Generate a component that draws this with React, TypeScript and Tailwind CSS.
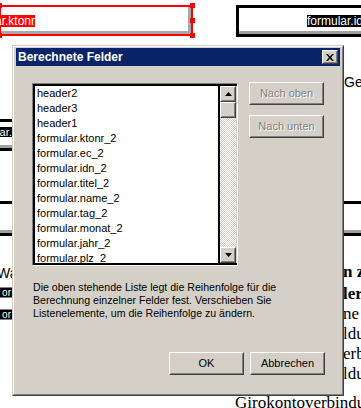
import React from "react";

const items = [
  "header2",
  "header3",
  "header1",
  "formular.ktonr_2",
  "formular.ec_2",
  "formular.idn_2",
  "formular.titel_2",
  "formular.name_2",
  "formular.tag_2",
  "formular.monat_2",
  "formular.jahr_2",
  "formular.plz_2",
];

// classic raised 3D edge (win2000 look)
function Raised({ className = "", children }: { className?: string; children?: React.ReactNode }) {
  return (
    <div className={`border border-white border-r-[#404040] border-b-[#404040] ${className}`}>
      <div className="flex h-full w-full items-center justify-center border border-[#d4d0c8] border-r-[#808080] border-b-[#808080] bg-[#d4d0c8]">
        {children}
      </div>
    </div>
  );
}

function Arrow({ down }: { down?: boolean }) {
  return (
    <svg width="7" height="4" viewBox="0 0 7 4">
      <path d={down ? "M0 0h7L3.5 4z" : "M0 4h7L3.5 0z"} fill="#000" />
    </svg>
  );
}

function PushButton({ label, disabled }: { label: string; disabled?: boolean }) {
  return (
    <Raised className="h-[23px] w-[75px]">
      <span
        className={`text-[11px] ${disabled ? "text-[#808080] [text-shadow:1px_1px_0_#fff]" : "text-black"}`}
      >
        {label}
      </span>
    </Raised>
  );
}

function Field({ className }: { className: string }) {
  return (
    <div className={`absolute border-[3px] border-black ${className}`}>
      <div className="h-full w-full border-b-[3px] border-[#a0a0a0] bg-white" />
    </div>
  );
}

export default function App() {
  return (
    <div className="relative h-[408px] w-[361px] overflow-hidden bg-white font-['Liberation_Sans',Arial,sans-serif]">
      {/* form designer canvas behind the dialog */}
      <div className="absolute left-[-1px] top-[5px] h-[31px] w-[194px] border-2 border-[#ff0000]">
        <div className="h-full w-full border-r-[3px] border-b-[3px] border-[#a8a8a8] bg-white" />
      </div>
      <div className="absolute left-[-3px] top-[3px] h-[5px] w-[5px] bg-[#ff0000]" />
      <div className="absolute left-[-3px] top-[33px] h-[5px] w-[5px] bg-[#ff0000]" />
      <div className="absolute left-[190px] top-[3px] h-[5px] w-[5px] bg-[#ff0000]" />
      <div className="absolute left-[190px] top-[18px] h-[5px] w-[5px] bg-[#ff0000]" />
      <div className="absolute left-[190px] top-[33px] h-[5px] w-[5px] bg-[#ff0000]" />
      <div className="absolute left-0 top-[15px] flex w-[35px] justify-end overflow-hidden">
        <span className="whitespace-nowrap bg-[#ff0000] text-[12px] leading-[12px] text-white">formular.ktonr</span>
      </div>

      <Field className="left-[236px] top-[5px] h-[32px] w-[140px]" />
      <span className="absolute left-[307px] top-[15px] whitespace-nowrap bg-black text-[12px] leading-[12px] text-white">
        formular.idn_2
      </span>

      <span className="absolute left-[344px] top-[72px] text-[14px] text-black">Ge</span>

      <Field className="left-[-100px] top-[119px] h-[32px] w-[250px]" />
      <div className="absolute left-0 top-[127px] flex w-[40px] justify-start overflow-hidden">
        <span className="ml-[-31px] whitespace-nowrap bg-black text-[11px] leading-[10px] text-white">formular.name</span>
      </div>

      <Field className="left-[-10px] top-[201px] h-[35px] w-[400px]" />

      <span className="absolute left-[-3px] top-[263px] text-[14px] text-black">Wa</span>
      <div className="absolute left-[-2px] top-[287px] flex w-[15px] justify-end border border-[#808080] bg-black pr-[1px]">
        <span className="text-[10px] leading-[9px] text-white">or</span>
      </div>
      <div className="absolute left-[-2px] top-[309px] flex w-[15px] justify-end border border-[#808080] bg-black pr-[1px]">
        <span className="text-[10px] leading-[9px] text-white">or</span>
      </div>

      <div className="absolute left-[343px] top-[262px] whitespace-nowrap font-['Liberation_Serif',serif] text-[17px] leading-[20px] text-black">
        <div className="font-bold">n z</div>
        <div className="mt-[2px] font-bold">ler</div>
        <div>ne</div>
        <div>ldu</div>
        <div>erb</div>
        <div>ldu</div>
      </div>
      <span className="absolute left-[235px] top-[390px] whitespace-nowrap font-['Liberation_Serif',serif] text-[17px] text-black">
        Girokontoverbindung
      </span>

      {/* dialog */}
      <div className="absolute left-[12px] top-[45px] h-[351px] w-[332px] border border-[#d4d0c8] border-r-[#404040] border-b-[#404040]">
        <div className="flex h-full flex-col border border-white border-r-[#808080] border-b-[#808080] bg-[#d4d0c8] px-[2px] pt-[1px]">
          <div className="flex h-[18px] items-center justify-between bg-[#0a246a] pl-[2px] pr-[2px]">
            <span className="text-[12px] font-bold text-white">Berechnete Felder</span>
            <Raised className="h-[14px] w-[16px]">
              <svg width="8" height="7" viewBox="0 0 8 7">
                <path d="M0 0h2l2 2.5L6 0h2L5 3.5 8 7H6L4 4.5 2 7H0l3-3.5z" fill="#000" />
              </svg>
            </Raised>
          </div>

          <div className="ml-[16px] mt-[17px] flex">
            <div className="h-[183px] w-[206px] border border-[#808080] border-r-white border-b-white">
              <div className="flex h-full border-2 border-black border-r-0">
                <div className="flex-1 overflow-hidden border-r-2 border-black bg-white text-[11px] text-black">
                  {items.map((item) => (
                    <div key={item} className="h-[15px] whitespace-nowrap pl-[2px] leading-[15px]">
                      {item}
                    </div>
                  ))}
                </div>
                <div className="flex w-[16px] flex-col">
                  <Raised className="h-[16px]">
                    <Arrow />
                  </Raised>
                  <Raised className="h-[16px]" />
                  <div className="flex-1 bg-[repeating-conic-gradient(#d4d0c8_0%_25%,#ffffff_0%_50%)] bg-[length:2px_2px]" />
                  <Raised className="h-[16px]">
                    <Arrow down />
                  </Raised>
                </div>
                <div className="w-[1px] bg-[#d4d0c8]" />
              </div>
            </div>
            <div className="ml-[11px] mt-[-1px] flex flex-col gap-[10px]">
              <PushButton label="Nach oben" disabled />
              <PushButton label="Nach unten" disabled />
            </div>
          </div>

          <p className="ml-[17px] mt-[15px] text-[10.6px] leading-[13px] text-black">
            Die oben stehende Liste legt die Reihenfolge für die
            <br />
            Berechnung einzelner Felder fest. Verschieben Sie
            <br />
            Listenelemente, um die Reihenfolge zu ändern.
          </p>

          <div className="mt-[32px] flex justify-end gap-[6px] pr-[15px]">
            <PushButton label="OK" />
            <PushButton label="Abbrechen" />
          </div>
        </div>
      </div>
    </div>
  );
}
